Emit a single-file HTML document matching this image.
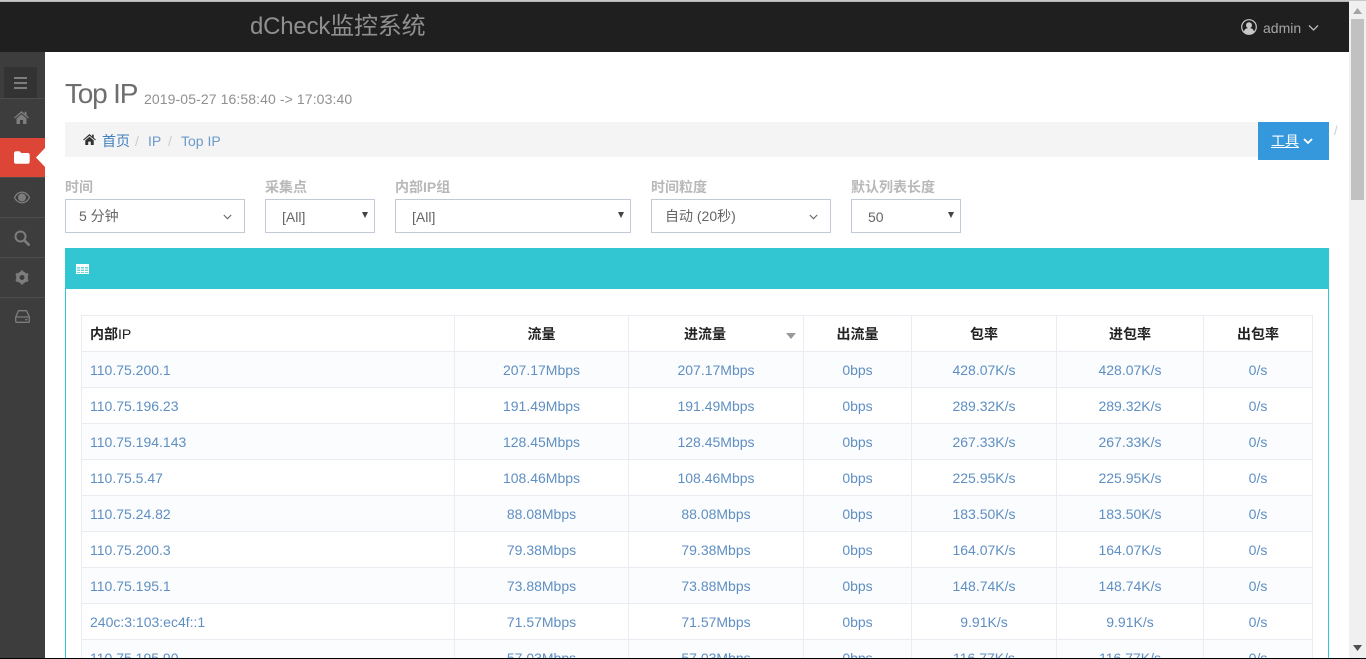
<!DOCTYPE html>
<html lang="zh">
<head>
<meta charset="utf-8">
<title>dCheck监控系统</title>
<style>
html,body{margin:0;padding:0;width:1366px;height:659px;overflow:hidden;background:#fff;font-family:"Liberation Sans","Noto Sans CJK SC",sans-serif;font-size:14px;color:#555}
*{box-sizing:border-box}
#page{position:absolute;left:0;top:0;width:1366px;height:659px;overflow:hidden;background:#fff}
.a{position:absolute;white-space:nowrap}
#top{left:0;top:2px;width:1349px;height:50px;background:#1f1f1f}
#topline{left:0;top:0;width:1349px;height:2px;background:#b5b5b5}
#side{left:0;top:52px;width:45px;height:607px;background:#3d3d3d}
.sep{position:absolute;left:0;width:45px;height:1px;background:#4d4d4d}
.lbl{font-size:14px;font-weight:bold;color:#b8b8b8;top:179px;line-height:17px}
.sel{top:199px;height:34px;border:1px solid #c2cad8;background:#fff;color:#666;font-size:14px;line-height:33px}
.tbl{position:absolute;left:81px;top:315px;border-collapse:collapse;table-layout:fixed;width:1231px;font-size:14px}
.tbl th,.tbl td{border:1px solid #e9ecf1;text-align:center;padding:2px 0 0;height:36px;line-height:33px;color:#5f8fc2;font-weight:normal;white-space:nowrap;overflow:hidden}
.tbl th{color:#222;font-weight:bold;font-size:14px;background:#fff;padding-top:1px;line-height:34px}
.tbl tr:nth-child(even) td{background:#fbfcfd}
.tbl td:first-child,.tbl th:first-child{text-align:left;padding-left:8px}
.tbl th span{font-weight:normal}
.tbl tr.last td{height:18px;padding-top:0;line-height:18px;border-bottom:0;background:#fbfcfd}
.tbl tr.last td div{height:18px;line-height:37px;overflow:hidden}
</style>
</head>
<body>
<div id="page">
<div class="a" id="topline"></div>
<div class="a" id="top"></div>
<div class="a" style="left:250px;top:12px;font-size:24px;line-height:30px;color:#8f8f8f;letter-spacing:-.2px">dCheck监控系统</div>

<svg class="a" style="left:1241px;top:19px" width="16" height="16" viewBox="0 0 16 16"><circle cx="8" cy="8" r="7.300" fill="#1f1f1f" stroke="#c8c8c8" stroke-width="1.200"/><circle cx="8" cy="6.200" r="3" fill="#c8c8c8"/><path d="M2.800 13c.6-3 2.600-4 5.200-4s4.600 1 5.200 4c-1.400 1.500-3.200 2.200-5.200 2.200S4.200 14.500 2.800 13z" fill="#c8c8c8"/></svg>
<div class="a" style="left:1263px;top:20px;font-size:14px;line-height:17px;color:#a5a5a5">admin</div>
<svg class="a" style="left:1308px;top:24px" width="11" height="8" viewBox="0 0 11 8"><path d="M1 1.500l4.500 4.500 4.500-4.500" fill="none" stroke="#bbb" stroke-width="1.300"/></svg>

<div class="a" id="side">
<div style="position:absolute;left:4px;top:15px;width:33px;height:31px;background:#333"></div>
<div class="sep" style="top:46px"></div>
<div class="sep" style="top:125px"></div>
<div class="sep" style="top:165px"></div>
<div class="sep" style="top:205px"></div>
<div class="sep" style="top:245px"></div>
<div style="position:absolute;left:0;top:86px;width:45px;height:39px;background:#dd4636"></div>
<svg style="position:absolute;left:36px;top:96px" width="9" height="19" viewBox="0 0 9 19"><path d="M9 0v19L0 9.500z" fill="#fff"/></svg>
<svg style="position:absolute;left:14px;top:25px" width="13" height="12" viewBox="0 0 13 12"><path d="M0 1h13M0 6h13M0 11h13" stroke="#7d7d7d" stroke-width="2"/></svg>
<svg style="position:absolute;left:14px;top:59px" width="15" height="13" viewBox="0 0 15 13"><path d="M7.500 0L0 6.600l.8.900L7.500 2l6.700 5.500.8-.9-2.500-2.200V.8h-1.900v2L7.500 0zM2.500 7.500V13h3.500V9h3v4h3.500V7.500L7.500 3.200z" fill="#7d7d7d"/></svg>
<svg style="position:absolute;left:14px;top:99px" width="16" height="13" viewBox="0 0 16 13"><path d="M0 2.500C0 1.200 1 .2 2.200.2h3.300l1.800 1.800h6.500c1 0 1.900.8 1.900 1.900v7c0 1-.9 1.900-1.900 1.900H2C.9 12.800 0 12 0 10.900z" fill="#fff"/></svg>
<svg style="position:absolute;left:14px;top:139px" width="16" height="13" viewBox="0 0 16 13"><path d="M.5 6.500C2.300 3 5 1.200 8 1.200s5.700 1.800 7.500 5.300C13.700 10 11 11.800 8 11.800S2.300 10 .5 6.500z" fill="none" stroke="#7d7d7d" stroke-width="1.300"/><circle cx="8" cy="6.500" r="4" fill="#7d7d7d"/></svg>
<svg style="position:absolute;left:14px;top:178px" width="16" height="16" viewBox="0 0 16 16"><circle cx="6.500" cy="6.500" r="5" fill="none" stroke="#7d7d7d" stroke-width="2"/><path d="M10.300 10.300l4.400 4.400" stroke="#7d7d7d" stroke-width="2.600" stroke-linecap="round"/></svg>
<svg style="position:absolute;left:15px;top:218px" width="14" height="15" viewBox="0 0 14 15"><circle cx="7" cy="7.500" r="4.200" fill="none" stroke="#7d7d7d" stroke-width="3.400"/><path d="M7 .5v3M7 11.500v3M1 4l2.500 1.500M10.500 9.500L13 11M1 11l2.500-1.500M10.500 5.500L13 4" stroke="#7d7d7d" stroke-width="2.600"/></svg>
<svg style="position:absolute;left:15px;top:258px" width="15" height="13" viewBox="0 0 15 13"><path d="M3.500 .7h8L14.300 7v4.200c0 .6-.5 1.100-1.100 1.100H1.800c-.6 0-1.100-.5-1.100-1.100V7zM.8 7h13.400" fill="none" stroke="#7d7d7d" stroke-width="1.300"/><path d="M10 9.700h2.500" stroke="#7d7d7d" stroke-width="1.200"/></svg>
</div>

<div class="a" style="left:65px;top:76px;font-size:28px;line-height:36px;color:#6e6e6e;letter-spacing:-1.200px">Top IP</div>
<div class="a" style="left:144px;top:90px;font-size:14px;line-height:18px;color:#909090;letter-spacing:.1px">2019-05-27 16:58:40 -&gt; 17:03:40</div>

<div class="a" style="left:65px;top:122px;width:1193px;height:35px;background:#f4f4f4"></div>
<svg class="a" style="left:83px;top:134px" width="13" height="11" viewBox="0 0 15 13"><path d="M7.500 0L0 6.600l.8.900L7.500 2l6.700 5.500.8-.9-2.500-2.200V.8h-1.900v2L7.500 0zM2.500 7.500V13h3.500V9h3v4h3.500V7.500L7.500 3.200z" fill="#333"/></svg>
<div class="a" style="left:102px;top:132px;font-size:14px;line-height:18px;color:#3f80bd">首页</div>
<div class="a" style="left:135px;top:132px;font-size:14px;line-height:18px;color:#ccc">/</div>
<div class="a" style="left:148px;top:132px;font-size:14px;line-height:18px;color:#6a9ac9">IP</div>
<div class="a" style="left:168px;top:132px;font-size:14px;line-height:18px;color:#ccc">/</div>
<div class="a" style="left:181px;top:132px;font-size:14px;line-height:18px;color:#6a9ac9">Top IP</div>

<div class="a" style="left:1258px;top:122px;width:71px;height:38px;background:#3598dc"></div>
<div class="a" style="left:1271px;top:132px;font-size:14px;line-height:18px;color:#fff;text-decoration:underline">工具</div>
<svg class="a" style="left:1303px;top:138px" width="10" height="7" viewBox="0 0 10 7"><path d="M1 1l4 4 4-4" fill="none" stroke="#fff" stroke-width="1.800"/></svg>
<div class="a" style="left:1334px;top:123px;font-size:13px;line-height:16px;color:#ccc">/</div>

<div class="a lbl" style="left:65px">时间</div>
<div class="a lbl" style="left:265px">采集点</div>
<div class="a lbl" style="left:395px">内部IP组</div>
<div class="a lbl" style="left:651px">时间粒度</div>
<div class="a lbl" style="left:851px">默认列表长度</div>

<div class="a sel" style="left:65px;width:180px;padding-left:13px">5 分钟
<svg style="position:absolute;left:157px;top:14px" width="9" height="6" viewBox="0 0 9 6"><path d="M.8 1l3.700 3.700L8.200 1" fill="none" stroke="#666" stroke-width="1.100"/></svg></div>
<div class="a sel" style="left:265px;width:110px;padding-left:16px;line-height:35px">[All]
<svg style="position:absolute;left:96px;top:12px" width="6" height="6" viewBox="0 0 6 6"><path d="M0 0h6L3 6z" fill="#444"/></svg></div>
<div class="a sel" style="left:395px;width:236px;padding-left:16px;line-height:35px">[All]
<svg style="position:absolute;left:222px;top:12px" width="6" height="6" viewBox="0 0 6 6"><path d="M0 0h6L3 6z" fill="#444"/></svg></div>
<div class="a sel" style="left:651px;width:180px;padding-left:13px">自动 (20秒)
<svg style="position:absolute;left:157px;top:14px" width="9" height="6" viewBox="0 0 9 6"><path d="M.8 1l3.700 3.700L8.200 1" fill="none" stroke="#666" stroke-width="1.100"/></svg></div>
<div class="a sel" style="left:851px;width:110px;padding-left:16px;line-height:35px">50
<svg style="position:absolute;left:96px;top:12px" width="6" height="6" viewBox="0 0 6 6"><path d="M0 0h6L3 6z" fill="#444"/></svg></div>

<div class="a" style="left:65px;top:248px;width:1264px;height:411px;border:1px solid #32c5d2;border-bottom:0"></div>
<div class="a" style="left:65px;top:248px;width:1264px;height:41px;background:#32c5d2"></div>
<svg class="a" style="left:76px;top:264px" width="13" height="10" viewBox="0 0 13 10"><path d="M0 0h13v10H0z" fill="#fff"/><path d="M1 3h3v1.500H1zM5 3h3v1.500H5zM9 3h3v1.500H9zM1 5.500h3V7H1zM5 5.500h3V7H5zM9 5.500h3V7H9zM1 8h3v1H1zM5 8h3v1H5zM9 8h3v1H9z" fill="#6dd6df"/></svg>

<table class="tbl">
<colgroup><col style="width:373px"><col style="width:174px"><col style="width:175px"><col style="width:108px"><col style="width:145px"><col style="width:147px"><col style="width:109px"></colgroup>
<tr><th>内部<span>IP</span></th><th>流量</th><th style="padding-right:22px">进流量</th><th>出流量</th><th>包率</th><th>进包率</th><th>出包率</th></tr>
<tr><td>110.75.200.1</td><td>207.17Mbps</td><td>207.17Mbps</td><td>0bps</td><td>428.07K/s</td><td>428.07K/s</td><td>0/s</td></tr>
<tr><td>110.75.196.23</td><td>191.49Mbps</td><td>191.49Mbps</td><td>0bps</td><td>289.32K/s</td><td>289.32K/s</td><td>0/s</td></tr>
<tr><td>110.75.194.143</td><td>128.45Mbps</td><td>128.45Mbps</td><td>0bps</td><td>267.33K/s</td><td>267.33K/s</td><td>0/s</td></tr>
<tr><td>110.75.5.47</td><td>108.46Mbps</td><td>108.46Mbps</td><td>0bps</td><td>225.95K/s</td><td>225.95K/s</td><td>0/s</td></tr>
<tr><td>110.75.24.82</td><td>88.08Mbps</td><td>88.08Mbps</td><td>0bps</td><td>183.50K/s</td><td>183.50K/s</td><td>0/s</td></tr>
<tr><td>110.75.200.3</td><td>79.38Mbps</td><td>79.38Mbps</td><td>0bps</td><td>164.07K/s</td><td>164.07K/s</td><td>0/s</td></tr>
<tr><td>110.75.195.1</td><td>73.88Mbps</td><td>73.88Mbps</td><td>0bps</td><td>148.74K/s</td><td>148.74K/s</td><td>0/s</td></tr>
<tr><td>240c:3:103:ec4f::1</td><td>71.57Mbps</td><td>71.57Mbps</td><td>0bps</td><td>9.91K/s</td><td>9.91K/s</td><td>0/s</td></tr>
<tr class="last"><td><div>110.75.195.90</div></td><td><div>57.03Mbps</div></td><td><div>57.03Mbps</div></td><td><div>0bps</div></td><td><div>116.77K/s</div></td><td><div>116.77K/s</div></td><td><div>0/s</div></td></tr>
</table>
<svg class="a" style="left:786px;top:333px" width="10" height="6" viewBox="0 0 10 6"><path d="M0 0h10L5 6z" fill="#999"/></svg>

<div class="a" style="left:1349px;top:0;width:17px;height:659px;background:#f0f0f0"></div>
<div class="a" style="left:1351px;top:19px;width:13px;height:181px;background:#c1c1c1"></div>
<svg class="a" style="left:1353px;top:8px" width="9" height="6" viewBox="0 0 9 6"><path d="M0 6h9L4.500 0z" fill="#a3a3a3"/></svg>
<svg class="a" style="left:1353px;top:645px" width="9" height="6" viewBox="0 0 9 6"><path d="M0 0h9L4.500 6z" fill="#505050"/></svg>
<div class="a" style="left:0;top:0;width:1366px;height:1px;background:#c8c8c8"></div>
<div class="a" style="left:0;top:658px;width:1366px;height:1px;background:#000"></div>
</div>
</body>
</html>
